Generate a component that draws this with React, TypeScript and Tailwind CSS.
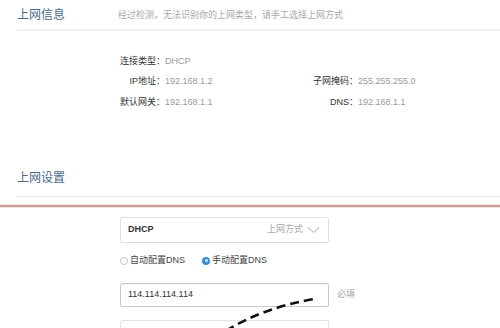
import React from "react";

const font = { fontFamily: '"Liberation Sans", "Noto Sans CJK SC", sans-serif' };

function Row({ label, value }: { label: string; value: string }) {
  return (
    <>
      <div className="text-right text-[#333]">{label}</div>
      <div className="text-[#9a9a9a]">{value}</div>
    </>
  );
}

export default function App() {
  return (
    <div className="relative w-[500px] h-[328px] overflow-hidden bg-white" style={font}>
      {/* Section 1 header */}
      <div className="ml-[17px] flex items-center h-[31px] border-b-2 border-[#efefef]">
        <div className="w-[101px] text-[12px] text-[#4a6a8a] pt-[1px]">上网信息</div>
        <div className="text-[9px] text-[#a8a8a8] pt-[2px]">经过检测，无法识别你的上网类型，请手工选择上网方式</div>
      </div>

      {/* Info grid */}
      <div className="pl-[120px] pt-[20px] grid grid-cols-[45px_146px_47px_1fr] auto-rows-[20.5px] items-center text-[9px]">
        <Row label="连接类型：" value="DHCP" />
        <div />
        <div />
        <Row label="IP地址：" value="192.168.1.2" />
        <Row label="子网掩码：" value="255.255.255.0" />
        <Row label="默认网关：" value="192.168.1.1" />
        <Row label="DNS：" value="192.168.1.1" />
      </div>

      {/* Section 2 header */}
      <div className="mt-[46px] ml-[17px] h-[38px] flex items-center border-b border-[#e6ece2]">
        <div className="text-[12px] text-[#4a6a8a] pt-[1px]">上网设置</div>
      </div>
      <div className="mt-[7px] h-[1px] bg-[#f3e4e2]" />
      <div className="h-[2px] bg-[#c7a199]" />
      <div className="h-[1px] bg-[#f3e4e2]" />

      {/* Form */}
      <div className="pl-[120px] pt-[9px]">
        <div className="w-[209px] h-[26px] border border-[#e0e0e0] rounded-[2px] flex items-center pl-[7px] pr-[8px] text-[9px]">
          <div className="flex-1 text-[#333] font-semibold">DHCP</div>
          <div className="text-[#aaa]">上网方式</div>
          <svg width="13" height="8" viewBox="0 0 13 8" className="ml-[4px]">
            <polyline points="1,1.5 6.5,6.5 12,1.5" fill="none" stroke="#aaa" strokeWidth="1" />
          </svg>
        </div>

        <div className="mt-[10px] h-[16px] flex items-center text-[9px] text-[#444]">
          <span className="w-[8px] h-[8px] rounded-full border border-[#c8c8c8] bg-white" />
          <span className="ml-[2px]">自动配置DNS</span>
          <span className="ml-[17px] w-[8px] h-[8px] rounded-full bg-[#3a8fd6] flex items-center justify-center">
            <span className="w-[3px] h-[3px] rounded-full bg-[#cfe6fa]" />
          </span>
          <span className="ml-[2px]">手动配置DNS</span>
        </div>

        <div className="mt-[14px] flex items-center">
          <div className="w-[209px] h-[24px] border border-[#c9c9c9] rounded-[2px] shadow-[inset_0_1px_1px_rgba(0,0,0,0.06)] flex items-center pl-[7px] text-[9px] text-[#333]">
            114.114.114.114
          </div>
          <div className="ml-[8px] text-[9px] text-[#aaa]">必填</div>
        </div>

        <div className="mt-[13px] w-[209px] h-[24px] border border-[#e2e2e2] rounded-[2px]" />
      </div>

      {/* Dashed annotation line */}
      <svg className="absolute left-0 top-0 pointer-events-none" width="500" height="328" viewBox="0 0 500 328">
        <path d="M 226 331 Q 262 308 314 299" fill="none" stroke="#111" strokeWidth="2.6" strokeDasharray="9 5" />
      </svg>
    </div>
  );
}
